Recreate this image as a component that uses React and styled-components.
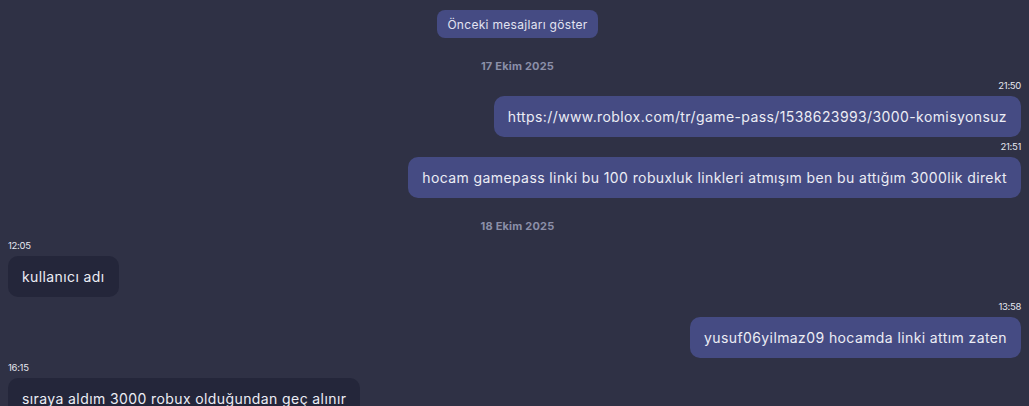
import React from "react";
import styled, { createGlobalStyle } from "styled-components";

const GlobalStyle = createGlobalStyle`
  html, body {
    margin: 0;
    padding: 0;
    background: #2f3145;
    font-family: "Inter", "Open Sans", sans-serif;
  }
`;

const messages = [
  { type: "date", label: "17 Ekim 2025" },
  { type: "msg", mine: true, time: "21:50", text: "https://www.roblox.com/tr/game-pass/1538623993/3000-komisyonsuz" },
  { type: "msg", mine: true, time: "21:51", text: "hocam gamepass linki bu 100 robuxluk linkleri atmışım ben bu attığım 3000lik direkt" },
  { type: "date", label: "18 Ekim 2025" },
  { type: "msg", mine: false, time: "12:05", text: "kullanıcı adı" },
  { type: "msg", mine: true, time: "13:58", text: "yusuf06yilmaz09 hocamda linki attım zaten" },
  { type: "msg", mine: false, time: "16:15", text: "sıraya aldım 3000 robux olduğundan geç alınır" },
];

const App = () => {
  return (
    <>
      <GlobalStyle />
      <ChatWrap>
        <LoadMore>Önceki mesajları göster</LoadMore>
        {messages.map((m, i) =>
          m.type === "date" ? (
            <DateLabel key={i}>{m.label}</DateLabel>
          ) : (
            <MessageRow key={i} $mine={m.mine}>
              <Time>{m.time}</Time>
              <Bubble $mine={m.mine}>{m.text}</Bubble>
            </MessageRow>
          )
        )}
      </ChatWrap>
    </>
  );
};

const ChatWrap = styled.div`
  height: 406px;
  overflow: hidden;
  box-sizing: border-box;
  padding: 10px 8px 0 8px;
  display: flex;
  flex-direction: column;
  background: #2f3145;

  & > * {
    flex-shrink: 0;
  }
`;

const LoadMore = styled.button`
  align-self: center;
  margin-left: 6px;
  margin-bottom: 4px;
  background: #454b83;
  color: #e3e4f2;
  border: none;
  border-radius: 8px;
  padding: 0 10px;
  height: 28px;
  font-family: inherit;
  font-size: 12px;
  letter-spacing: 0.3px;
  cursor: pointer;
`;

const DateLabel = styled.div`
  align-self: center;
  margin-left: 6px;
  margin-top: 17px;
  margin-bottom: 7px;
  line-height: 14px;
  font-size: 11px;
  font-weight: 700;
  letter-spacing: 0.2px;
  color: #8b8fa8;
`;

const MessageRow = styled.div`
  display: flex;
  flex-direction: column;
  align-items: ${(p) => (p.$mine ? "flex-end" : "flex-start")};
  margin-bottom: 4px;
`;

const Time = styled.div`
  font-size: 9.5px;
  line-height: 12px;
  letter-spacing: -0.3px;
  color: #e6e7f0;
  margin-bottom: 4px;
`;

const Bubble = styled.div`
  max-width: 70%;
  box-sizing: border-box;
  padding: 0 14px;
  height: 41px;
  display: flex;
  align-items: center;
  border-radius: 10px;
  background: ${(p) => (p.$mine ? "#454b83" : "#24263a")};
  color: #ecedf5;
  font-size: 14px;
  letter-spacing: 0.4px;
  white-space: nowrap;
`;

export default App;
